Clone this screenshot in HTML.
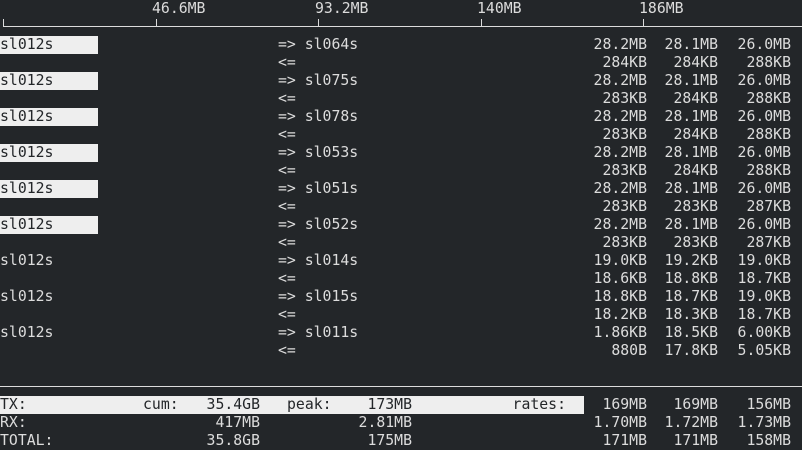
<!DOCTYPE html>
<html><head><meta charset="utf-8"><style>
html,body{margin:0;padding:0}
body{width:802px;height:449px;background:#232629;color:#dcdcdc;font-family:"DejaVu Sans Mono","Liberation Mono",monospace;font-size:14.8px;position:relative;overflow:hidden}
div{position:absolute;line-height:18px;height:18px;white-space:pre}
.hl{background:#eeeeee;color:#232629}
.c1{right:155px}.c2{right:84px}.c3{right:11px}
.ln{background:#dcdcdc;height:1px}
.tk{background:#dcdcdc;width:1px;height:8px;top:19px}
</style></head><body>
<div style="left:152px;top:0">46.6MB</div>
<div style="left:315px;top:0">93.2MB</div>
<div style="left:477px;top:0">140MB</div>
<div style="left:639px;top:0">186MB</div>
<div class="ln" style="left:3px;top:26px;width:799px"></div>
<div class="tk" style="left:3px"></div>
<div class="tk" style="left:156px"></div>
<div class="tk" style="left:318px"></div>
<div class="tk" style="left:481px"></div>
<div class="tk" style="left:643px"></div>

<div class="hl" style="left:0;top:36px;width:98px">sl012s</div>
<div style="left:278px;top:36px">=&gt; sl064s</div><div style="left:278px;top:54px">&lt;=</div>
<div class="c1" style="top:36px">28.2MB</div><div class="c2" style="top:36px">28.1MB</div><div class="c3" style="top:36px">26.0MB</div>
<div class="c1" style="top:54px">284KB</div><div class="c2" style="top:54px">284KB</div><div class="c3" style="top:54px">288KB</div>

<div class="hl" style="left:0;top:72px;width:98px">sl012s</div>
<div style="left:278px;top:72px">=&gt; sl075s</div><div style="left:278px;top:90px">&lt;=</div>
<div class="c1" style="top:72px">28.2MB</div><div class="c2" style="top:72px">28.1MB</div><div class="c3" style="top:72px">26.0MB</div>
<div class="c1" style="top:90px">283KB</div><div class="c2" style="top:90px">284KB</div><div class="c3" style="top:90px">288KB</div>

<div class="hl" style="left:0;top:108px;width:98px">sl012s</div>
<div style="left:278px;top:108px">=&gt; sl078s</div><div style="left:278px;top:126px">&lt;=</div>
<div class="c1" style="top:108px">28.2MB</div><div class="c2" style="top:108px">28.1MB</div><div class="c3" style="top:108px">26.0MB</div>
<div class="c1" style="top:126px">283KB</div><div class="c2" style="top:126px">284KB</div><div class="c3" style="top:126px">288KB</div>

<div class="hl" style="left:0;top:144px;width:98px">sl012s</div>
<div style="left:278px;top:144px">=&gt; sl053s</div><div style="left:278px;top:162px">&lt;=</div>
<div class="c1" style="top:144px">28.2MB</div><div class="c2" style="top:144px">28.1MB</div><div class="c3" style="top:144px">26.0MB</div>
<div class="c1" style="top:162px">283KB</div><div class="c2" style="top:162px">284KB</div><div class="c3" style="top:162px">288KB</div>

<div class="hl" style="left:0;top:180px;width:98px">sl012s</div>
<div style="left:278px;top:180px">=&gt; sl051s</div><div style="left:278px;top:198px">&lt;=</div>
<div class="c1" style="top:180px">28.2MB</div><div class="c2" style="top:180px">28.1MB</div><div class="c3" style="top:180px">26.0MB</div>
<div class="c1" style="top:198px">283KB</div><div class="c2" style="top:198px">283KB</div><div class="c3" style="top:198px">287KB</div>

<div class="hl" style="left:0;top:216px;width:98px">sl012s</div>
<div style="left:278px;top:216px">=&gt; sl052s</div><div style="left:278px;top:234px">&lt;=</div>
<div class="c1" style="top:216px">28.2MB</div><div class="c2" style="top:216px">28.1MB</div><div class="c3" style="top:216px">26.0MB</div>
<div class="c1" style="top:234px">283KB</div><div class="c2" style="top:234px">283KB</div><div class="c3" style="top:234px">287KB</div>

<div style="left:0;top:252px">sl012s</div>
<div style="left:278px;top:252px">=&gt; sl014s</div><div style="left:278px;top:270px">&lt;=</div>
<div class="c1" style="top:252px">19.0KB</div><div class="c2" style="top:252px">19.2KB</div><div class="c3" style="top:252px">19.0KB</div>
<div class="c1" style="top:270px">18.6KB</div><div class="c2" style="top:270px">18.8KB</div><div class="c3" style="top:270px">18.7KB</div>

<div style="left:0;top:288px">sl012s</div>
<div style="left:278px;top:288px">=&gt; sl015s</div><div style="left:278px;top:306px">&lt;=</div>
<div class="c1" style="top:288px">18.8KB</div><div class="c2" style="top:288px">18.7KB</div><div class="c3" style="top:288px">19.0KB</div>
<div class="c1" style="top:306px">18.2KB</div><div class="c2" style="top:306px">18.3KB</div><div class="c3" style="top:306px">18.7KB</div>

<div style="left:0;top:324px">sl012s</div>
<div style="left:278px;top:324px">=&gt; sl011s</div><div style="left:278px;top:342px">&lt;=</div>
<div class="c1" style="top:324px">1.86KB</div><div class="c2" style="top:324px">18.5KB</div><div class="c3" style="top:324px">6.00KB</div>
<div class="c1" style="top:342px">880B</div><div class="c2" style="top:342px">17.8KB</div><div class="c3" style="top:342px">5.05KB</div>

<div class="ln" style="left:0;top:386px;width:802px"></div>

<div class="hl" style="left:0;top:396px;width:584px"></div>
<div style="left:0;top:396px;color:#232629">TX:</div>
<div style="left:143px;top:396px;color:#232629">cum:</div>
<div style="right:542px;top:396px;color:#232629">35.4GB</div>
<div style="left:287px;top:396px;color:#232629">peak:</div>
<div style="right:390px;top:396px;color:#232629">173MB</div>
<div style="right:236px;top:396px;color:#232629">rates:</div>
<div class="c1" style="top:396px">169MB</div><div class="c2" style="top:396px">169MB</div><div class="c3" style="top:396px">156MB</div>

<div style="left:0;top:414px">RX:</div>
<div style="right:542px;top:414px">417MB</div>
<div style="right:390px;top:414px">2.81MB</div>
<div class="c1" style="top:414px">1.70MB</div><div class="c2" style="top:414px">1.72MB</div><div class="c3" style="top:414px">1.73MB</div>

<div style="left:0;top:432px">TOTAL:</div>
<div style="right:542px;top:432px">35.8GB</div>
<div style="right:390px;top:432px">175MB</div>
<div class="c1" style="top:432px">171MB</div><div class="c2" style="top:432px">171MB</div><div class="c3" style="top:432px">158MB</div>
</body></html>
